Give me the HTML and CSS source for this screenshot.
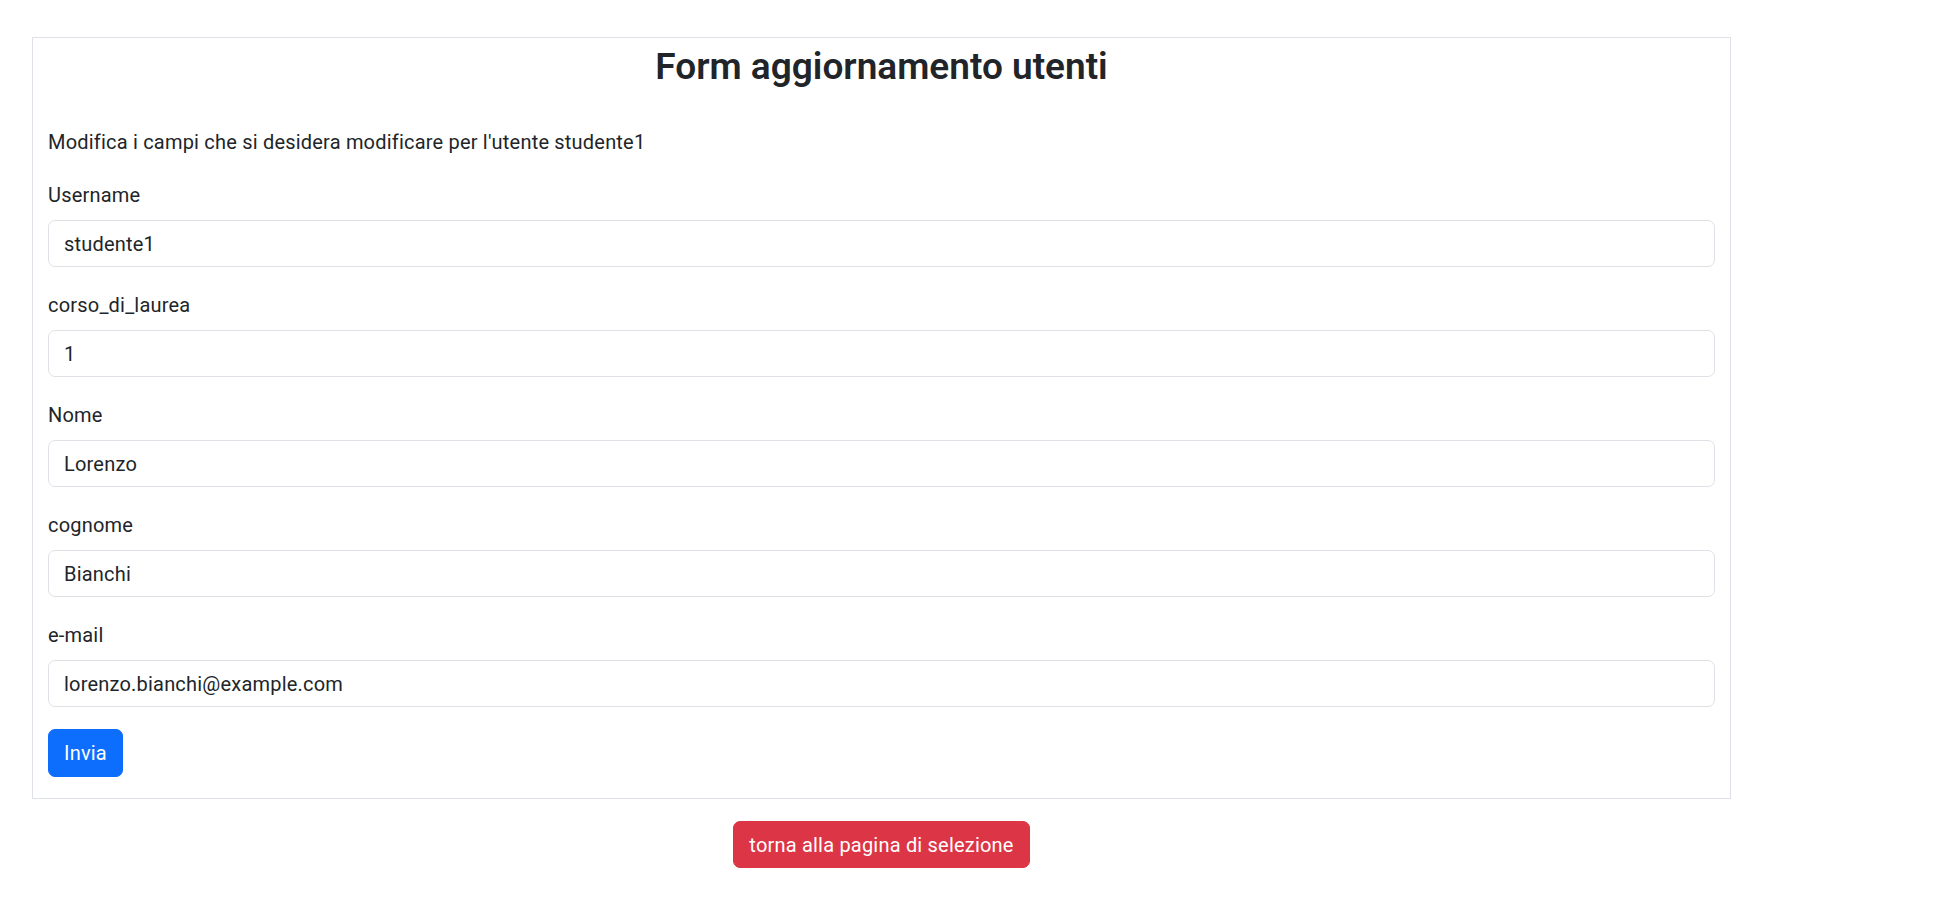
FILE: index.html
```html
<!DOCTYPE html>
<html lang="it">
<head>
<meta charset="utf-8">
<title>Form aggiornamento utenti</title>
<link rel="stylesheet" href="styles.css">
</head>
<body>
<div class="page">
  <div class="wrap">
    <form class="card">
      <h2 class="title">Form aggiornamento utenti</h2>
      <p class="intro">Modifica i campi che si desidera modificare per l'utente studente1</p>
      <div class="field">
        <label class="label" for="username">Username</label>
        <input class="input" id="username" type="text" value="studente1">
      </div>
      <div class="field">
        <label class="label" for="corso">corso_di_laurea</label>
        <input class="input" id="corso" type="text" value="1">
      </div>
      <div class="field">
        <label class="label" for="nome">Nome</label>
        <input class="input" id="nome" type="text" value="Lorenzo">
      </div>
      <div class="field">
        <label class="label" for="cognome">cognome</label>
        <input class="input" id="cognome" type="text" value="Bianchi">
      </div>
      <div class="field field-last">
        <label class="label" for="email">e-mail</label>
        <input class="input" id="email" type="text" value="lorenzo.bianchi@example.com">
      </div>
      <button class="btn btn-primary" type="button">Invia</button>
    </form>
    <div class="back-row">
      <button class="btn btn-danger" type="button">torna alla pagina di selezione</button>
    </div>
  </div>
</div>
</body>
</html>
```
FILE: styles.css
```css
* { box-sizing: border-box; }

html, body {
  margin: 0;
  padding: 0;
  background: #fff;
}

body {
  font-family: Roboto, "Liberation Sans", sans-serif;
  font-size: 20px;
  line-height: 30px;
  letter-spacing: 0.2px;
  color: #212529;
}

.page {
  padding: 37px 0 0 32px;
}

.wrap {
  width: 1699px;
}

.card {
  display: flex;
  flex-direction: column;
  align-items: flex-start;
  border: 1px solid #dee2e6;
  padding: 0 15px 21px;
  margin: 0;
}

.title {
  align-self: stretch;
  text-align: center;
  font-size: 37px;
  line-height: 44px;
  font-weight: 600;
  letter-spacing: 0;
  margin: 7px 0 38px;
  color: #212529;
}

.intro {
  margin: 0 0 23px;
}

.field {
  align-self: stretch;
  display: flex;
  flex-direction: column;
  margin-bottom: 23px;
}

.field-last {
  margin-bottom: 22px;
}

.label {
  display: block;
  margin-bottom: 10px;
}

.input {
  display: block;
  width: 100%;
  height: 47px;
  padding: 7px 15px;
  font: inherit;
  letter-spacing: 0.2px;
  color: #212529;
  background: #fff;
  border: 1px solid #dee2e6;
  border-radius: 7px;
  outline: none;
}

.btn {
  display: inline-block;
  font: inherit;
  letter-spacing: 0.2px;
  color: #fff;
  border: 1px solid transparent;
  border-radius: 7px;
  padding: 8px 15px;
  line-height: 30px;
  cursor: pointer;
}

.btn-primary {
  background: #0d6efd;
  border-color: #0d6efd;
  height: 48px;
}

.btn-danger {
  background: #dc3545;
  border-color: #dc3545;
  height: 47px;
  padding: 7px 15px;
}

.back-row {
  display: flex;
  justify-content: center;
  padding-top: 22px;
}
```
